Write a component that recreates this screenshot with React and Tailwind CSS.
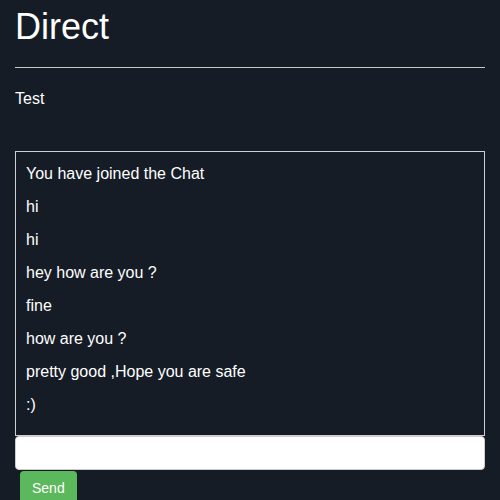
import React from "react";

const messages = [
  "You have joined the Chat",
  "hi",
  "hi",
  "hey how are you ?",
  "fine",
  "how are you ?",
  "pretty good ,Hope you are safe",
  ":)",
];

const App = () => {
  return (
    <div className="min-h-[500px] w-[500px] overflow-hidden bg-[#151c26] px-[15px] font-['Liberation_Sans',Arial,sans-serif] text-white">
      <h1 className="pt-[7px] text-[36px] leading-[40px]">Direct</h1>
      <hr className="mt-[20px] border-t border-[#c8c8c8]" />
      <p className="mt-[20px] text-[16px] leading-[22px]">Test</p>

      <div className="mt-[41px] flex h-[285px] flex-col border border-[#cfcfcf] px-[10px] pt-[5px]">
        {messages.map((m, i) => (
          <div key={i} className="h-[33px] text-[16px] leading-[33px]">
            {m}
          </div>
        ))}
      </div>

      <input
        type="text"
        className="block h-[34px] w-full rounded-[4px] border border-[#ccc] bg-white px-3 text-[14px] text-[#555] outline-none"
      />
      <button className="ml-[5px] mt-px h-[34px] rounded-[4px] bg-[#5cb85c] px-[12px] text-[14px] leading-[20px] text-white">
        Send
      </button>
    </div>
  );
};

export default App;
